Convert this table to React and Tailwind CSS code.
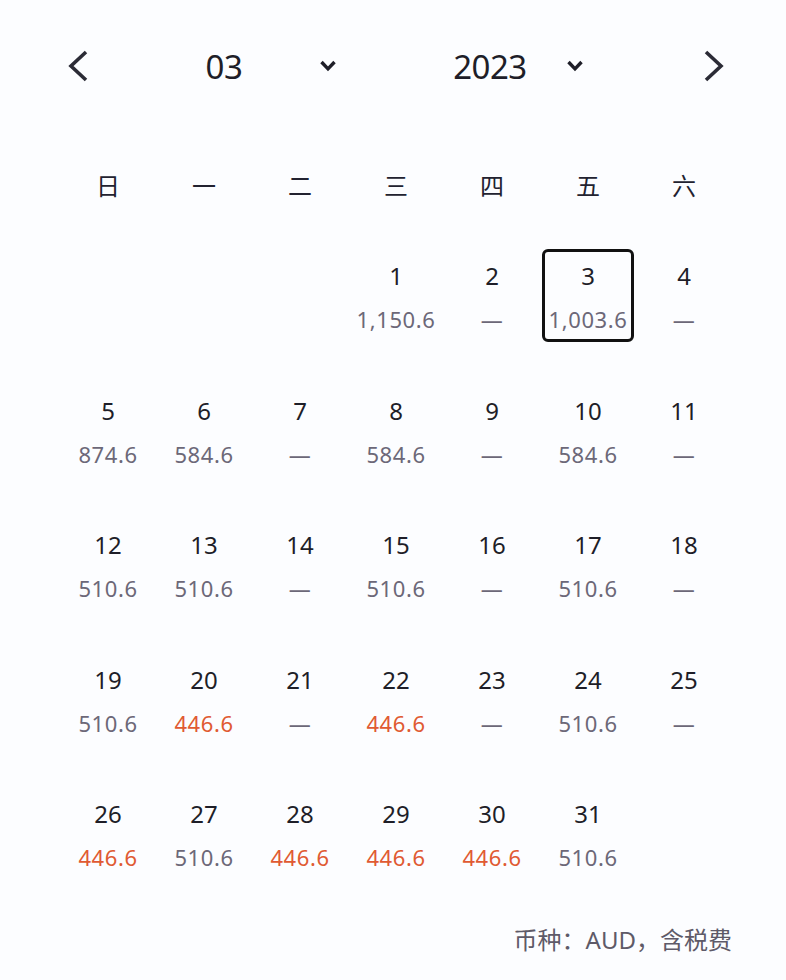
const weekdays = ["日", "一", "二", "三", "四", "五", "六"];

// price per day; null = no price
const prices = {
  1: "1,150.6", 2: null, 3: "1,003.6", 4: null,
  5: "874.6", 6: "584.6", 7: null, 8: "584.6", 9: null, 10: "584.6", 11: null,
  12: "510.6", 13: "510.6", 14: null, 15: "510.6", 16: null, 17: "510.6", 18: null,
  19: "510.6", 20: "446.6", 21: null, 22: "446.6", 23: null, 24: "510.6", 25: null,
  26: "446.6", 27: "510.6", 28: "446.6", 29: "446.6", 30: "446.6", 31: "510.6",
};

const cheap = "446.6";
const selected = 3;
const firstWeekday = 3; // March 1st 2023 is a Wednesday

function Chevron({ dir }) {
  return (
    <svg width="24" height="32" viewBox="0 0 24 32" className="shrink-0">
      <polyline
        points={dir === "left" ? "19,2 4,16 19,30" : "5,2 20,16 5,30"}
        fill="none"
        stroke="#2b2b36"
        strokeWidth="3.6"
        strokeLinejoin="miter"
      />
    </svg>
  );
}

function Caret() {
  return (
    <svg width="16" height="12" viewBox="0 0 16 12" className="shrink-0">
      <polyline points="1.5,2 8,8.8 14.5,2" fill="none" stroke="#1e1e28" strokeWidth="3.4" />
    </svg>
  );
}

export default function App() {
  const cells = [];
  for (let i = 0; i < firstWeekday; i++) cells.push(null);
  for (let d = 1; d <= 31; d++) cells.push(d);

  return (
    <div
      className="w-[786px] h-[980px] bg-[#fcfdff] overflow-hidden"
      style={{ fontFamily: '"Noto Sans", "Noto Sans CJK SC", sans-serif' }}
    >
      {/* Header */}
      <div className="pt-[40px] h-[92px] flex items-center">
        <div className="ml-[67px]"><Chevron dir="left" /></div>
        <div className="ml-[93px] w-[80px] text-center text-[33px] leading-none text-[#1e1e28] tracking-[-0.5px]">03</div>
        <div className="ml-[56px]"><Caret /></div>
        <div className="ml-[104px] w-[100px] text-center text-[33px] leading-none text-[#1e1e28] tracking-[-0.5px]">2023</div>
        <div className="ml-[27px]"><Caret /></div>
        <div className="ml-[118px]"><Chevron dir="right" /></div>
      </div>

      {/* Weekdays */}
      <div className="mt-[73px] ml-[60px] w-[672px] grid grid-cols-7 h-[40px] items-center">
        {weekdays.map((w) => (
          <div key={w} className="text-center text-[24px] leading-none text-[#222230]" style={{ fontFamily: '"Noto Sans CJK SC", sans-serif' }}>
            {w}
          </div>
        ))}
      </div>

      {/* Days */}
      <div className="mt-[44px] ml-[60px] w-[672px] grid grid-cols-7 gap-y-[41.5px]">
        {cells.map((d, i) => (
          <div key={i} className="flex justify-center">
            {d && (
              <div
                className={
                  "w-[92px] h-[93px] flex flex-col items-center rounded-[6px] border-[3px] " +
                  (d === selected ? "border-[#111]" : "border-transparent")
                }
              >
                <div className="mt-[9px] h-[30px] text-[24px] leading-[30px] text-[#1e1e28]">{d}</div>
                <div
                  className={
                    "mt-[13px] h-[30px] text-[22px] leading-[30px] tracking-[0.6px] " +
                    (prices[d] === cheap ? "text-[#e05a32]" : "text-[#6c6878]")
                  }
                >
                  {prices[d] ?? "—"}
                </div>
              </div>
            )}
          </div>
        ))}
      </div>

      {/* Footer */}
      <div className="mt-[45px] w-[732px] text-right text-[24px] leading-[30px] text-[#5e5a68]">
        币种：AUD，含税费
      </div>
    </div>
  );
}
